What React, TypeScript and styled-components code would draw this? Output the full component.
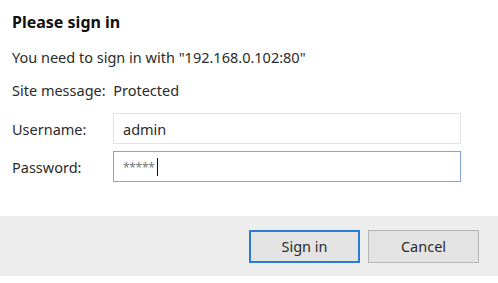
import React from 'react';
import styled, { createGlobalStyle } from 'styled-components';

const GlobalStyle = createGlobalStyle`
  html, body {
    margin: 0;
    padding: 0;
    background: #ffffff;
  }
  body {
    font-family: 'Noto Sans', 'Open Sans', Arial, sans-serif;
    color: #1f1f1f;
  }
`;

const Dialog = styled.div`
  width: 498px;
  height: 283px;
  display: flex;
  flex-direction: column;
  background: #ffffff;
`;

const Body = styled.div`
  padding: 12px 37px 0 12px;
  display: flex;
  flex-direction: column;
  height: 216px;
  box-sizing: border-box;
`;

const Title = styled.div`
  font-size: 16px;
  font-weight: 700;
  color: #111;
  line-height: 20px;
  margin-bottom: 15px;
`;

const Message = styled.div<{ $gap: number }>`
  font-size: 14.5px;
  line-height: 20px;
  color: #2b2b2b;
  margin-bottom: ${p => p.$gap}px;
`;

const FieldRow = styled.div`
  display: flex;
  align-items: center;
  margin-bottom: 7px;
`;

const Label = styled.label`
  width: 101px;
  font-size: 14.5px;
  color: #2b2b2b;
`;

const Field = styled.div<{ $focused?: boolean }>`
  flex: 1;
  height: 31px;
  box-sizing: border-box;
  border: 1px solid ${p => (p.$focused ? '#7fa4de' : '#e3e3e3')};
  display: flex;
  align-items: center;
  padding: 0 0 0 9px;
  font-size: 14.5px;
  color: #2b2b2b;
`;

const Mask = styled.span`
  color: #777;
  font-size: 12px;
  letter-spacing: -0.3px;
  margin-top: 2px;
`;

const Caret = styled.span`
  display: inline-block;
  width: 1px;
  height: 18px;
  background: #111;
  margin-left: 2px;
`;

const Footer = styled.div`
  height: 60px;
  background: #ededed;
  display: flex;
  justify-content: flex-end;
  align-items: center;
  gap: 8px;
  padding-right: 19px;
`;

const Button = styled.button<{ $primary?: boolean }>`
  width: 111px;
  height: 33px;
  box-sizing: border-box;
  background: #e3e3e3;
  border: ${p => (p.$primary ? '2px solid #2b7bd0' : '1px solid #b4b4b4')};
  font-family: inherit;
  font-size: 14.5px;
  color: #2b2b2b;
  padding: 0;
`;

const App = () => {
  return (
    <>
      <GlobalStyle />
      <Dialog>
        <Body>
          <Title>Please sign in</Title>
          <Message $gap={13}>You need to sign in with "192.168.0.102:80"</Message>
          <Message $gap={13}>Site message:&nbsp; Protected</Message>
          <FieldRow>
            <Label>Username:</Label>
            <Field>admin</Field>
          </FieldRow>
          <FieldRow>
            <Label>Password:</Label>
            <Field $focused>
              <Mask>*****</Mask>
              <Caret />
            </Field>
          </FieldRow>
        </Body>
        <Footer>
          <Button $primary>Sign in</Button>
          <Button>Cancel</Button>
        </Footer>
      </Dialog>
    </>
  );
};

export default App;
